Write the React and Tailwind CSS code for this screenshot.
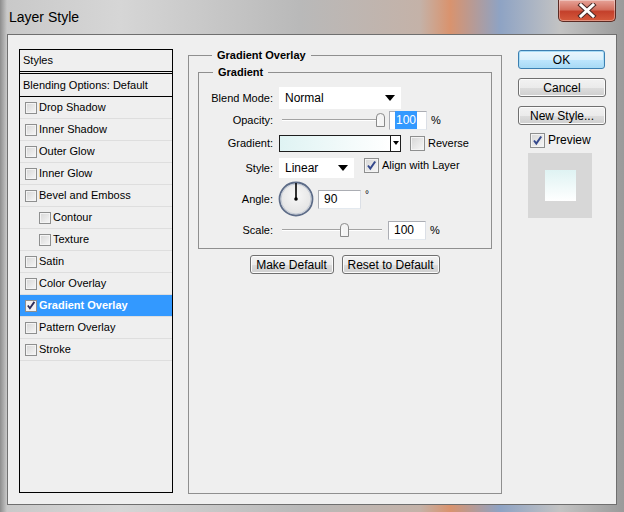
import React from 'react'

const styleItems = [
  { label: 'Drop Shadow' },
  { label: 'Inner Shadow' },
  { label: 'Outer Glow' },
  { label: 'Inner Glow' },
  { label: 'Bevel and Emboss' },
  { label: 'Contour', indent: true },
  { label: 'Texture', indent: true },
  { label: 'Satin' },
  { label: 'Color Overlay' },
  { label: 'Gradient Overlay', active: true, checked: true },
  { label: 'Pattern Overlay' },
  { label: 'Stroke' },
]

function Tick({ color = '#34488c' }) {
  return (
    <svg width="11" height="11" viewBox="0 0 11 11">
      <path d="M2 5.5 L4.3 8.5 L9.2 1.5" fill="none" stroke={color} strokeWidth="2" />
    </svg>
  )
}

function Check({ checked, small }) {
  const size = small ? 'h-[12px] w-[12px]' : 'h-[15px] w-[15px]'
  return (
    <span
      className={`${size} flex shrink-0 items-center justify-center border border-[#8e8f8f] bg-[linear-gradient(135deg,#d6d6d6,#f7f7f7)] shadow-[inset_0_0_0_1px_#f4f4f4]`}
    >
      {checked && <Tick />}
    </span>
  )
}

function StyleRow({ item }) {
  const tone = item.active ? 'bg-[#3399ff] font-bold text-white' : 'text-black'
  return (
    <div
      className={`flex h-[22px] items-center gap-[2px] border-b border-[#dedede] ${item.indent ? 'pl-[19px]' : 'pl-[5px]'} ${tone}`}
    >
      {item.active ? (
        <span className="flex h-[12px] w-[12px] shrink-0 items-center justify-center border border-[#8e8f8f] bg-[#f2f2f2]">
          <Tick color="#2d2d5a" />
        </span>
      ) : (
        <Check small />
      )}
      <span>{item.label}</span>
    </div>
  )
}

function WinButton({ children, primary, className = '' }) {
  const border = primary
    ? 'border-[#3c7fb1] shadow-[inset_0_0_0_1px_#a8dcf6]'
    : 'border-[#707070] shadow-[inset_0_0_0_1px_#fbfbfb]'
  return (
    <button
      className={`flex h-[19px] items-center justify-center rounded-[3px] border text-[12px] leading-none text-black ${border} ${primary ? 'bg-[linear-gradient(#eaf6fd_0%,#d9f0fc_50%,#bee6fd_51%,#a7d9f5_100%)]' : 'bg-[linear-gradient(#f2f2f2_0%,#ebebeb_50%,#dddddd_51%,#cfcfcf_100%)]'} ${className}`}
    >
      {children}
    </button>
  )
}

function Caret() {
  return (
    <svg width="10" height="6" viewBox="0 0 10 6">
      <path d="M0 0 H10 L5 6 Z" fill="#000" />
    </svg>
  )
}

function Select({ value, width }) {
  return (
    <div className={`flex h-full items-center justify-between bg-white pl-[6px] pr-[6px] text-[12px] ${width}`}>
      <span>{value}</span>
      <Caret />
    </div>
  )
}

function TextBox({ children, width, selected }) {
  return (
    <div
      className={`flex h-[19px] items-center border border-[#abadb3] border-b-[#e3e9ef] border-r-[#dbdfe6] bg-white pl-[5px] text-[12px] ${width}`}
    >
      <span className={selected ? 'bg-[#3399ff] px-[1px] text-white' : ''}>{children}</span>
    </div>
  )
}

function Slider({ pos, width }) {
  return (
    <div className={`relative ml-[3px] h-[14px] ${width}`}>
      <div className="absolute left-0 right-0 top-[6px] h-[2px] border-t border-[#a3a3a3] border-b border-b-white" />
      <svg className="absolute top-0" style={{ left: pos }} width="9" height="14" viewBox="0 0 9 14">
        <path d="M0.5 13.5 V4 Q0.5 0.5 4.5 0.5 Q8.5 0.5 8.5 4 V13.5 Z" fill="#f4f4f4" stroke="#8a8a8a" />
        <path d="M2 6 V12" stroke="#ffffff" />
      </svg>
    </div>
  )
}

function Dial() {
  return (
    <svg width="36" height="36" viewBox="0 0 36 36">
      <defs>
        <radialGradient id="dialfill" cx="0.5" cy="0.4" r="0.6">
          <stop offset="0" stopColor="#f7f7f7" />
          <stop offset="1" stopColor="#e2e2e2" />
        </radialGradient>
      </defs>
      <circle cx="18" cy="18" r="16.5" fill="url(#dialfill)" stroke="#5d6c88" strokeWidth="1.8" />
      <circle cx="18" cy="18" r="15" fill="none" stroke="#b9c1cf" strokeWidth="0.8" />
      <path d="M18 18 V2" stroke="#000" strokeWidth="1.6" />
      <circle cx="18" cy="18" r="1.8" fill="#000" />
    </svg>
  )
}

function FormRow({ label, children, className }) {
  return (
    <div className={`flex items-center ${className}`}>
      <span className="w-[74px] shrink-0 text-right">{label}</span>
      <div className="ml-[6px] flex h-full items-center">{children}</div>
    </div>
  )
}

function CloseButton() {
  return (
    <div className="mr-[8px] flex h-[22px] w-[58px] items-center justify-center rounded-b-[5px] border border-t-0 border-[#5b2a23] bg-[linear-gradient(#e6a398_0%,#d3705f_45%,#c4402b_55%,#d55a3c_100%)] shadow-[inset_0_0_0_1px_rgba(255,255,255,0.35)]">
      <svg width="20" height="15" viewBox="0 0 20 15">
        <path d="M4 2 L16 13 M16 2 L4 13" stroke="#4b2a26" strokeWidth="5" strokeLinecap="square" />
        <path d="M4 2 L16 13 M16 2 L4 13" stroke="#ffffff" strokeWidth="3" strokeLinecap="square" />
      </svg>
    </div>
  )
}

export default function App() {
  return (
    <div className='flex h-[512px] w-[624px] flex-col overflow-hidden bg-[linear-gradient(90deg,#8d8d8d_0px,#c9c9c9_7px,#d6d6d6_120px,#b9b9b9_300px,#c4b2a8_420px,#d9936e_450px,#8ea3c4_500px,#c3c3c3_560px,#9a9a9a_624px)] font-["Liberation_Sans",Arial,sans-serif] text-[11px] text-black'>
      <div className="flex h-[34px] shrink-0 items-start justify-between">
        <span className="pl-[9px] pt-[9px] text-[14px] leading-[17px] text-black">Layer Style</span>
        <CloseButton />
      </div>

      <div className="mx-[7px] flex h-[471px] shrink-0 border border-[#6f6f6f] bg-[#efefef] pl-[11px] pt-[14px]">
        {/* styles list */}
        <div className="flex h-[444px] w-[154px] shrink-0 flex-col border border-black">
          <div className="flex h-[22px] items-center border-b border-black pl-[3px]">Styles</div>
          <div className="mt-[1px] flex h-[24px] items-center border-y border-black pl-[3px]">
            Blending Options: Default
          </div>
          {styleItems.map((item) => (
            <StyleRow key={item.label} item={item} />
          ))}
        </div>

        {/* gradient overlay group */}
        <div className="ml-[15px] flex w-[314px] shrink-0 flex-col">
          <fieldset className="h-[445px] border border-[#8f8f8f] px-[9px]">
            <legend className="ml-[14px] px-[5px] text-[11px] font-bold leading-[13px]">Gradient Overlay</legend>
            <fieldset className="mt-[4px] h-[183px] border border-[#8f8f8f]">
              <legend className="ml-[14px] px-[5px] text-[11px] font-bold leading-[13px]">Gradient</legend>
              <div className="flex flex-col pt-[8px]">
                <FormRow label="Blend Mode:" className="h-[22px]">
                  <Select value="Normal" width="w-[122px]" />
                </FormRow>
                <FormRow label="Opacity:" className="mt-[1px] h-[20px]">
                  <Slider pos={94} width="w-[101px]" />
                  <div className="ml-[6px]">
                    <TextBox width="w-[38px]" selected>
                      100
                    </TextBox>
                  </div>
                  <span className="ml-[4px]">%</span>
                </FormRow>
                <FormRow label="Gradient:" className="mt-[3px] h-[20px]">
                  <div className="flex h-[17px] w-[122px] border border-[#1e1e1e]">
                    <div className="flex-1 bg-[linear-gradient(90deg,#dff3f3,#ffffff)]" />
                    <div className="flex w-[10px] items-center justify-center border-l border-[#1e1e1e] bg-white">
                      <svg width="6" height="4" viewBox="0 0 6 4">
                        <path d="M0 0 H6 L3 4 Z" fill="#000" />
                      </svg>
                    </div>
                  </div>
                  <div className="ml-[9px] flex items-center gap-[3px]">
                    <Check />
                    <span>Reverse</span>
                  </div>
                </FormRow>
                <FormRow label="Style:" className="mt-[4px] h-[22px]">
                  <div className="flex h-[20px]">
                    <Select value="Linear" width="w-[75px]" />
                  </div>
                  <div className="ml-[10px] flex items-center gap-[3px] self-start">
                    <Check checked />
                    <span>Align with Layer</span>
                  </div>
                </FormRow>
                <FormRow label="Angle:" className="mt-[2px] h-[36px]">
                  <div className="-ml-[1px]">
                    <Dial />
                  </div>
                  <div className="ml-[4px]">
                    <TextBox width="w-[43px]">90</TextBox>
                  </div>
                  <span className="ml-[4px] self-start pt-[6px] text-[10px]">°</span>
                </FormRow>
                <FormRow label="Scale:" className="mt-[3px] h-[20px]">
                  <Slider pos={58} width="w-[100px]" />
                  <div className="ml-[6px]">
                    <TextBox width="w-[38px]">100</TextBox>
                  </div>
                  <span className="ml-[4px]">%</span>
                </FormRow>
              </div>
            </fieldset>
            <div className="mt-[6px] flex justify-center gap-[8px] pr-[1px]">
              <WinButton className="w-[84px]">Make Default</WinButton>
              <WinButton className="w-[98px]">Reset to Default</WinButton>
            </div>
          </fieldset>
        </div>

        {/* right column */}
        <div className="ml-[16px] flex w-[88px] shrink-0 flex-col pt-[1px]">
          <WinButton primary className="w-[87px]">
            OK
          </WinButton>
          <WinButton className="mt-[9px] w-[88px]">Cancel</WinButton>
          <WinButton className="mt-[9px] w-[88px]">New Style...</WinButton>
          <div className="mt-[6px] flex items-center gap-[3px] pl-[12px] text-[12px]">
            <Check checked />
            <span>Preview</span>
          </div>
          <div className="ml-[10px] mt-[4px] flex h-[65px] w-[64px] items-center justify-center bg-[#d7d7d7]">
            <div className="h-[31px] w-[31px] bg-[linear-gradient(#dff3f3,#ffffff)]" />
          </div>
        </div>
      </div>
    </div>
  )
}
